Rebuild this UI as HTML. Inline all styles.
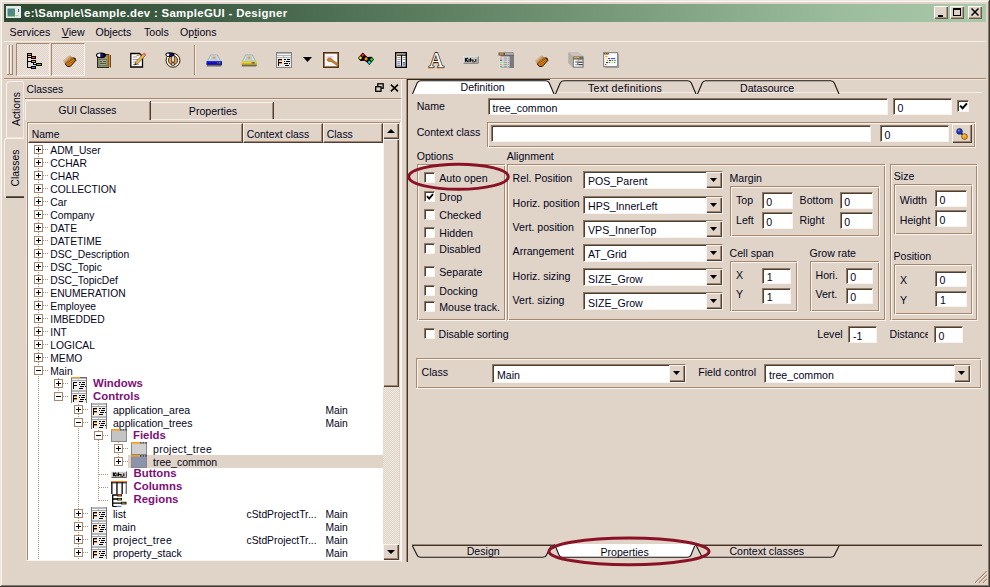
<!DOCTYPE html>
<html><head><meta charset="utf-8"><title>Designer</title>
<style>
html,body{margin:0;padding:0}
body{width:990px;height:587px;overflow:hidden;position:relative;background:#e0d4c8;font-family:"Liberation Sans",sans-serif;color:#04041a}
body div,body svg{position:absolute;box-sizing:border-box}
.t{white-space:nowrap;overflow:visible}
u{text-decoration:underline}
</style></head><body>
<div style="left:0px;top:0px;width:990px;height:587px;background:#e0d4c8"></div>
<div style="left:0px;top:0px;width:990px;height:1px;background:#efe6dd"></div>
<div style="left:0px;top:0px;width:1px;height:587px;background:#efe6dd"></div>
<div style="left:1px;top:1px;width:988px;height:1px;background:#fbf8f4"></div>
<div style="left:1px;top:1px;width:1px;height:585px;background:#fbf8f4"></div>
<div style="left:988px;top:1px;width:1px;height:585px;background:#8c7868"></div>
<div style="left:1px;top:585px;width:988px;height:1px;background:#8c7868"></div>
<div style="left:989px;top:0px;width:1px;height:587px;background:#3c3836"></div>
<div style="left:0px;top:586px;width:990px;height:1px;background:#3c3836"></div>
<div style="left:4px;top:4px;width:982px;height:18px;background:linear-gradient(90deg,#2d4931 0%,#43634a 25%,#6e8f70 55%,#9cbd9d 85%,#a9c9a9 100%)"></div>
<svg style="left:6px;top:6px" width="15" height="12" viewBox="0 0 15 12"><rect x="0" y="0" width="15" height="12" fill="#e8ece8"/><defs><linearGradient id="ig" x1="0" y1="0" x2="1" y2="1"><stop offset="0" stop-color="#4c7a92"/><stop offset="1" stop-color="#4f9a66"/></linearGradient></defs><rect x="1.5" y="2.5" width="7.5" height="8" fill="url(#ig)"/><rect x="12" y="3" width="1" height="3" fill="#2a6a9a"/><rect x="9.5" y="9" width="3" height="1.2" fill="#b8c0b8"/></svg>
<div class="t" style="left:24px;top:5.65px;font-size:11.4px;line-height:14px;color:#fff;font-weight:bold;letter-spacing:0.31px">e:\Sample\Sample.dev : SampleGUI - Designer</div>
<div style="left:934px;top:6px;width:14px;height:13px;background:#e0d4c8;box-shadow:inset 1px 1px 0 #fff,inset -1px -1px 0 #6a5a50,inset -2px -2px 0 #b09880"></div>
<div style="left:938px;top:15px;width:5px;height:2px;background:#000"></div>
<div style="left:950px;top:6px;width:14px;height:13px;background:#e0d4c8;box-shadow:inset 1px 1px 0 #fff,inset -1px -1px 0 #6a5a50,inset -2px -2px 0 #b09880"></div>
<div style="left:953px;top:8px;width:8px;height:8px;border:1px solid #000;border-top:2px solid #000;box-sizing:border-box"></div>
<div style="left:968px;top:6px;width:14px;height:13px;background:#e0d4c8;box-shadow:inset 1px 1px 0 #fff,inset -1px -1px 0 #6a5a50,inset -2px -2px 0 #b09880"></div>
<svg style="left:971px;top:8px" width="8" height="8" viewBox="0 0 8 8"><path d="M0.5 0.5L7.5 7.5M7.5 0.5L0.5 7.5" stroke="#000" stroke-width="1.5"/></svg>
<div class="t" style="left:9.6px;top:25.13px;font-size:10.6px;line-height:14px;">Services</div>
<div class="t" style="left:61.8px;top:25.13px;font-size:10.6px;line-height:14px;"><u>V</u>iew</div>
<div class="t" style="left:95.4px;top:25.13px;font-size:10.6px;line-height:14px;">Objects</div>
<div class="t" style="left:144px;top:25.13px;font-size:10.6px;line-height:14px;">Tools</div>
<div class="t" style="left:180px;top:25.13px;font-size:10.6px;line-height:14px;">Op<u>t</u>ions</div>
<div style="left:4px;top:41px;width:982px;height:1px;background:#f6efe8"></div>
<div style="left:7px;top:45px;width:1px;height:30px;background:#f8f3ee"></div>
<div style="left:9px;top:45px;width:1px;height:30px;background:#a8876c"></div>
<div style="left:7px;top:74px;width:3px;height:1px;background:#a8876c"></div>
<div style="left:10px;top:45px;width:1px;height:30px;background:#f8f3ee"></div>
<div style="left:12px;top:45px;width:1px;height:30px;background:#a8876c"></div>
<div style="left:10px;top:74px;width:3px;height:1px;background:#a8876c"></div>
<div style="left:16px;top:43px;width:34px;height:33px;background-color:#ece4dc;background-image:linear-gradient(45deg,#e0d4c8 25%,transparent 25%,transparent 75%,#e0d4c8 75%),linear-gradient(45deg,#e0d4c8 25%,transparent 25%,transparent 75%,#e0d4c8 75%);background-size:2px 2px;background-position:0 0,1px 1px;border-top:1px solid #a8876c;border-left:1px solid #a8876c;border-right:1px solid #f8f3ee;border-bottom:1px solid #f8f3ee"></div>
<div style="left:51px;top:43px;width:34px;height:33px;background-color:#ece4dc;background-image:linear-gradient(45deg,#e0d4c8 25%,transparent 25%,transparent 75%,#e0d4c8 75%),linear-gradient(45deg,#e0d4c8 25%,transparent 25%,transparent 75%,#e0d4c8 75%);background-size:2px 2px;background-position:0 0,1px 1px;border-top:1px solid #a8876c;border-left:1px solid #a8876c;border-right:1px solid #f8f3ee;border-bottom:1px solid #f8f3ee"></div>
<div style="left:194px;top:45px;width:1px;height:30px;background:#a8876c"></div>
<div style="left:195px;top:45px;width:1px;height:30px;background:#f4ede6"></div>
<div style="left:4px;top:78px;width:982px;height:1px;background:#a8876c"></div>
<div style="left:4px;top:79px;width:982px;height:1px;background:#efe7df"></div>
<svg style="left:26px;top:53px" width="16" height="16" viewBox="0 0 16 16"><rect x="1" y="2" width="1" height="13" fill="#000"/><rect x="1" y="0" width="5" height="3" fill="#000"/><rect x="2" y="1" width="3" height="1" fill="#ff9a1a"/><rect x="2" y="4" width="3" height="1" fill="#000"/><rect x="5" y="3" width="5" height="3" fill="#000"/><rect x="6" y="4" width="3" height="1" fill="#ff4a10"/><rect x="2" y="8" width="3" height="1" fill="#000"/><rect x="5" y="7" width="5" height="3" fill="#000"/><rect x="6" y="8" width="3" height="1" fill="#e0b018"/><rect x="7" y="10" width="1" height="2" fill="#000"/><rect x="7" y="11" width="3" height="1" fill="#000"/><rect x="10" y="10" width="6" height="3" fill="#000"/><rect x="11" y="11" width="4" height="1" fill="#88b020"/><rect x="2" y="14" width="3" height="1" fill="#000"/><rect x="5" y="13" width="5" height="3" fill="#000"/><rect x="6" y="14" width="3" height="1" fill="#5a8cf0"/></svg>
<svg style="left:61px;top:53px" width="16" height="15" viewBox="0 0 16 15"><defs><linearGradient id="bk1" gradientUnits="userSpaceOnUse" x1="9" y1="8" x2="4" y2="3"><stop offset="0" stop-color="#b06a18" stop-opacity="1"/><stop offset="0.45" stop-color="#c08a48" stop-opacity="0.7"/><stop offset="1" stop-color="#d8c0a0" stop-opacity="0"/></linearGradient></defs><path d="M4.2 10.9L0.9 6.8L8.7 2.3L12.3 4.9Z" fill="url(#bk1)"/><path d="M4.2 10.9L12.1 4.9L14 5.2L14.9 7.3L9.45 13.3L6.35 13.5Z" fill="#d8800e" stroke="#140800" stroke-width="1" stroke-linejoin="round"/><path d="M5.2 10.6L12.4 5.3" stroke="#8a4806" stroke-width="1.2"/><path d="M6.6 12.2L13.8 6.8" stroke="#a85c0a" stroke-width="0.9"/><path d="M12.1 4.9L14 5.2L14.9 7.3L13.3 6.4Z" fill="#5a2c02"/><path d="M4.2 10.9L12.1 4.9" stroke="#c89048" stroke-width="0.7"/></svg>
<svg style="left:96px;top:52px" width="16" height="16" viewBox="0 0 16 16"><rect x="1.5" y="2.5" width="11" height="13" fill="#8c9070" stroke="#2a2a20" stroke-width="1"/><rect x="12.5" y="2.5" width="1.8" height="12.5" fill="#e89020"/><rect x="14" y="3" width="0.8" height="12.5" fill="#3a2a10"/><rect x="3" y="7.5" width="8" height="6" fill="#a4aa88" stroke="#5a6048" stroke-width="0.6"/><path d="M4 9.5h2M7 9.5h3M4 11.5h6M5 10.5v1" stroke="#4a5038" stroke-width="0.9"/><ellipse cx="5" cy="3.3" rx="5" ry="2.8" fill="#000"/><ellipse cx="3.6" cy="3.3" rx="2.4" ry="1.7" fill="#fff"/><rect x="4.2" y="1.8" width="3.4" height="3" fill="#10108a"/><path d="M9.2 5.4L11.2 6.4" stroke="#e89020" stroke-width="1.2"/></svg>
<svg style="left:130px;top:52px" width="16" height="16" viewBox="0 0 16 16"><path d="M0.8 1.5H9.5L12.5 4.5V15H0.8Z" fill="#fff" stroke="#000" stroke-width="1.3"/><path d="M3 5h4M3 7.5h5M3 10h3M3 12.5h6" stroke="#9a9a9a" stroke-width="1"/><path d="M6.5 3.5h3" stroke="#ff8a10" stroke-width="1.2"/><path d="M4.5 13L6 9.5L13.5 1.5L15.5 3.2L8 11.5Z" fill="#e8b858" stroke="#6a4a20" stroke-width="0.7"/><path d="M13 2L14.5 0.5L16 2L15.5 3.2Z" fill="#f06078"/><path d="M4.5 13L5.2 11.2L6.3 12.2Z" fill="#000"/></svg>
<svg style="left:165px;top:52px" width="16" height="16" viewBox="0 0 16 16"><circle cx="8" cy="8.3" r="7.7" fill="#f0b070"/><circle cx="8" cy="8.3" r="6.9" fill="#fff" stroke="#1a1410" stroke-width="0.9"/><circle cx="8" cy="8.3" r="4.6" fill="#e89848" stroke="#1a1410" stroke-width="0.8"/><rect x="6.8" y="3" width="2.4" height="7" fill="#fff" stroke="#1a1410" stroke-width="0.7"/><rect x="6.8" y="11" width="2.4" height="2.2" fill="#fff" stroke="#1a1410" stroke-width="0.7"/><ellipse cx="4.8" cy="2.6" rx="4.4" ry="2.4" fill="#000"/><rect x="4" y="1.3" width="3.2" height="2.7" fill="#10108a"/><ellipse cx="2.9" cy="2.7" rx="1.4" ry="1.3" fill="#fff"/></svg>
<svg style="left:205.5px;top:54px" width="16.5" height="14" viewBox="0 0 16.5 14"><defs><linearGradient id="dg1010d8" x1="0" y1="0" x2="0" y2="1"><stop offset="0" stop-color="#2a2622"/><stop offset="1" stop-color="#4a4038" stop-opacity="0"/></linearGradient></defs><path d="M1 10.5H16L15 13.5H0.5Z" fill="url(#dg1010d8)"/><path d="M4.5 1H11.5L14.5 7.5H1.5Z" fill="#d6e4e8" stroke="#8a9aa0" stroke-width="0.7"/><path d="M5.5 2H10.5L12.5 7H3.5Z" fill="#bcd0d6"/><ellipse cx="8" cy="3.8" rx="1.5" ry="1" fill="#f09828"/><rect x="0.5" y="7.2" width="15.5" height="3.3" fill="#1010d8"/><rect x="0.5" y="9.6" width="15.5" height="1" fill="#08088a"/><rect x="11" y="8.2" width="1.3" height="1.3" fill="#ff2020"/><rect x="13" y="8.2" width="1.3" height="1.3" fill="#20e020"/></svg>
<svg style="left:241px;top:54px" width="16.5" height="14" viewBox="0 0 16.5 14"><defs><linearGradient id="dhe8d030" x1="0" y1="0" x2="0" y2="1"><stop offset="0" stop-color="#2a2622"/><stop offset="1" stop-color="#4a4038" stop-opacity="0"/></linearGradient></defs><path d="M1 10.5H16L15 13.5H0.5Z" fill="url(#dhe8d030)"/><path d="M4.5 1H11.5L14.5 7.5H1.5Z" fill="#d6e4e8" stroke="#8a9aa0" stroke-width="0.7"/><path d="M5.5 2H10.5L12.5 7H3.5Z" fill="#bcd0d6"/><ellipse cx="8" cy="3.8" rx="1.5" ry="1" fill="#f09828"/><rect x="0.5" y="7.2" width="15.5" height="3.3" fill="#e8d030"/><rect x="0.5" y="9.6" width="15.5" height="1" fill="#a89818"/><rect x="10.5" y="8.2" width="1.2" height="1.3" fill="#ff2020"/><rect x="11.7" y="8.2" width="1.2" height="1.3" fill="#2020e0"/><rect x="12.9" y="8.2" width="1.2" height="1.3" fill="#20c020"/></svg>
<svg style="left:276px;top:52px" width="16" height="16" viewBox="0 0 16 16"><rect x="0.5" y="0.5" width="15" height="15" fill="#b4b4b4" stroke="#858585" stroke-width="1"/><rect x="1" y="2" width="14" height="1" fill="#f4f4f4"/><rect x="1" y="4" width="6" height="1" fill="#f4f4f4"/><rect x="8" y="4" width="7" height="1" fill="#f4f4f4"/><rect x="1" y="6" width="14" height="9" fill="#e9e9e9"/><rect x="2" y="7" width="1" height="7" fill="#000"/><rect x="2" y="7" width="4" height="1" fill="#000"/><rect x="2" y="10" width="4" height="1" fill="#000"/><rect x="3" y="8" width="3" height="1" fill="#ff8a10"/><rect x="3" y="11" width="3" height="1" fill="#ff8a10"/><rect x="8" y="7" width="2" height="1" fill="#000"/><rect x="11" y="7" width="3" height="1" fill="#000"/><rect x="8" y="9" width="1" height="1" fill="#000"/><rect x="10" y="9" width="4" height="1" fill="#000"/><rect x="8" y="11" width="4" height="1" fill="#000"/><rect x="13" y="11" width="1" height="1" fill="#000"/><rect x="9" y="13" width="4" height="1" fill="#000"/></svg>
<svg style="left:303px;top:57px" width="9" height="5" viewBox="0 0 9 5"><path d="M0 0H9L4.5 5Z" fill="#000"/></svg>
<svg style="left:323px;top:52px" width="16" height="16" viewBox="0 0 16 16"><rect x="0.8" y="0.8" width="14.4" height="14.4" fill="#fbf4f8" stroke="#7a4a1a" stroke-width="1.8"/><rect x="0.5" y="0.5" width="15" height="15" fill="none" stroke="#3a2208" stroke-width="0.6"/><path d="M4 7.5C5.5 5 8.5 5.5 9 7.5L15.5 12L14 13.5L8 9.5C6 10 4.5 9.5 4 7.5Z" fill="#c08030" stroke="#8a5a1a" stroke-width="0.5"/><path d="M3.5 5h7" stroke="#c8b8d0" stroke-width="0.8"/></svg>
<svg style="left:358px;top:52px" width="16" height="13" viewBox="0 0 16 13"><path d="M4.8 0.6L7.7 3.5L9.4 4.9L13.7 4.7L16 7.5L11.3 12.9L8.7 10.3L6.6 8.7L2.4 8.9L0 6Z" fill="#000"/><path d="M4.8 1.5000000000000002L6.5 3.2L4.8 4.9L3.0999999999999996 3.2Z" fill="#ff1010"/><path d="M2.5 4.2L4.2 5.9L2.5 7.6000000000000005L0.8 5.9Z" fill="#f0f010"/><circle cx="8.1" cy="6.8" r="1.6" fill="#ff8a10"/><path d="M13.6 5.8L15.299999999999999 7.5L13.6 9.2L11.9 7.5Z" fill="#10e010"/><path d="M11.3 8.5L13.0 10.2L11.3 11.899999999999999L9.600000000000001 10.2Z" fill="#10e0f0"/></svg>
<svg style="left:395px;top:52px" width="12" height="16" viewBox="0 0 12 16"><rect x="0.7" y="0.7" width="10.6" height="14.6" fill="#fff" stroke="#000" stroke-width="1.4"/><path d="M6.5 3V14.5M2 3.2h9" stroke="#000" stroke-width="1.2"/><path d="M2.3 2h2.5" stroke="#ff8a10" stroke-width="1"/><path d="M2.3 5.5h3M2.3 7.5h3M2.3 9.5h3M7.8 5.5h2.5M7.8 7.5h2.5M2.3 13.5h3M7.8 2h2.5" stroke="#8a8a8a" stroke-width="0.9"/><rect x="2.5" y="10.5" width="1.2" height="2" fill="#f020c0"/><rect x="3.7" y="10.5" width="1.2" height="2" fill="#20c0f0"/><rect x="7.8" y="10" width="2.4" height="3.5" fill="#3070d0"/><rect x="8.4" y="11" width="1.2" height="1.5" fill="#e0e020"/></svg>
<svg style="left:428px;top:51px" width="17" height="18" viewBox="-0.5 -1 17 18"><text x="7.4" y="15.5" text-anchor="middle" font-family="Liberation Serif" font-size="20.5" fill="#f0a858" stroke="#f0a858" stroke-width="1.6">A</text><text x="8" y="15.2" text-anchor="middle" font-family="Liberation Serif" font-size="20.5" fill="#000" stroke="#000" stroke-width="1.5">A</text><text x="8" y="15.2" text-anchor="middle" font-family="Liberation Serif" font-size="20.5" fill="#fff" stroke="#fff" stroke-width="0.25">A</text><circle cx="7.8" cy="7.4" r="0.7" fill="#ff8a10"/></svg>
<svg style="left:463px;top:56px" width="16" height="8" viewBox="0 0 16 8"><rect x="0" y="0" width="15.5" height="7.5" fill="#c8c8c8"/><path d="M0 7.5V0H15.5" stroke="#f4f4f4" stroke-width="1" fill="none"/><path d="M0.5 7.2H15.2V0.5" stroke="#707070" stroke-width="1" fill="none"/><path d="M2.5 2V5.8M2.5 3.8L5 2M2.5 3.8L5 5.8M6 3v2.8M7.5 2V5.8M7.5 4h2M10 3.5V5.8H12M12.8 3V5.8" stroke="#000" stroke-width="1.1" fill="none"/><rect x="10.2" y="5.2" width="1" height="1" fill="#ff8a10"/></svg>
<svg style="left:498px;top:52px" width="16" height="16" viewBox="0 0 16 16"><rect x="2.5" y="3" width="13.5" height="13" fill="#7a7a7a"/><rect x="0.5" y="0.5" width="15" height="3" fill="#505050"/><rect x="1.5" y="1.3" width="4" height="1.3" fill="#ffa020"/><rect x="7" y="1.3" width="8" height="1.3" fill="#d8d8d8"/><rect x="1.5" y="4.5" width="10" height="11" fill="#e4e4e4"/><rect x="2" y="5.5" width="2.3" height="1.3" fill="#ffa020"/><rect x="2" y="7.6" width="2.3" height="1.3" fill="#5050ff"/><rect x="2" y="9.7" width="2.3" height="1.3" fill="#80ff40"/><rect x="2" y="11.8" width="2.3" height="1.3" fill="#ffa020"/><rect x="2" y="13.7" width="2.3" height="1.3" fill="#40c0ff"/><path d="M5.5 6.1h5.5M5.5 8.2h5.5M5.5 10.3h5.5M5.5 12.4h5.5M5.5 14.3h5.5" stroke="#a0a0a0" stroke-width="1.2"/><path d="M9.5 5v10.5" stroke="#e4e4e4" stroke-width="0.6"/></svg>
<svg style="left:533px;top:53px" width="16" height="15" viewBox="0 0 16 15"><defs><linearGradient id="bk2" gradientUnits="userSpaceOnUse" x1="9" y1="8" x2="4" y2="3"><stop offset="0" stop-color="#b06a18" stop-opacity="1"/><stop offset="0.45" stop-color="#c08a48" stop-opacity="0.7"/><stop offset="1" stop-color="#d8c0a0" stop-opacity="0"/></linearGradient></defs><path d="M4.2 10.9L0.9 6.8L8.7 2.3L12.3 4.9Z" fill="url(#bk2)"/><path d="M4.2 10.9L12.1 4.9L14 5.2L14.9 7.3L9.45 13.3L6.35 13.5Z" fill="#d8800e" stroke="#140800" stroke-width="1" stroke-linejoin="round"/><path d="M5.2 10.6L12.4 5.3" stroke="#8a4806" stroke-width="1.2"/><path d="M6.6 12.2L13.8 6.8" stroke="#a85c0a" stroke-width="0.9"/><path d="M12.1 4.9L14 5.2L14.9 7.3L13.3 6.4Z" fill="#5a2c02"/><path d="M4.2 10.9L12.1 4.9" stroke="#c89048" stroke-width="0.7"/></svg>
<svg style="left:568px;top:52px" width="16" height="16" viewBox="0 0 16 16"><path d="M0.5 0.5H10.5L15.5 4.5V15.5H5L0.5 11Z" fill="#a8a8a8"/><path d="M0.5 0.5H10.5L15.5 4.5H5Z" fill="#c8c4bc"/><path d="M0.5 0.5L5 4.5V15.5L0.5 11Z" fill="#b4b0a8"/><rect x="5" y="4.5" width="10.5" height="11" fill="#6a6a6a"/><rect x="5.8" y="5" width="5.5" height="1.2" fill="#ffa020"/><rect x="5.8" y="7" width="9" height="8" fill="#8a8a8a"/><path d="M6.5 14.5V8.5H9.5M6.5 11.5H9" stroke="#fff" stroke-width="1.3" fill="none"/><path d="M10.5 9h4M10.5 11.5h4M7 13.8h7.5" stroke="#fff" stroke-width="1.3"/><path d="M10.5 10.2h4M10.5 12.6h4" stroke="#222" stroke-width="0.9"/></svg>
<svg style="left:603px;top:52px" width="16" height="16" viewBox="0 0 16 16"><rect x="2" y="2" width="14" height="14" fill="#8a8a8a" opacity="0.7"/><rect x="0.6" y="0.6" width="14" height="14" fill="#fcfcfc" stroke="#8a8a8a" stroke-width="1.2"/><rect x="1.2" y="1" width="4.5" height="1.6" fill="#4a3a20"/><rect x="1.8" y="1.2" width="1.2" height="1.1" fill="#ffa020"/><rect x="3.6" y="1.2" width="1.2" height="1.1" fill="#ffa020"/><rect x="2.3" y="4" width="2" height="1.1" fill="#ff8a10"/><rect x="3" y="6" width="1.2" height="1.1" fill="#f0e020"/><rect x="5.2" y="6" width="2" height="1.1" fill="#404040"/><rect x="8" y="6" width="4.2" height="1.1" fill="#4848ff"/><rect x="4" y="8" width="1.2" height="1.1" fill="#20e020"/><rect x="6" y="8" width="2.2" height="1.1" fill="#404040"/><rect x="9.2" y="8" width="1" height="1.1" fill="#404040"/><rect x="11" y="8" width="2" height="1.1" fill="#20e020"/><rect x="3" y="10" width="2.2" height="1.1" fill="#404040"/><rect x="6.2" y="10" width="1" height="1.1" fill="#4848ff"/><rect x="8.2" y="10" width="2" height="1.1" fill="#f0e020"/><rect x="11.2" y="10" width="1" height="1.1" fill="#4848ff"/><rect x="2.2" y="12" width="1.1" height="1.1" fill="#c02010"/></svg>
<div style="left:6px;top:81px;width:18px;height:57px;border-left:1px solid #f8f3ee;border-top:1px solid #f8f3ee;border-right:1px solid #f0e9e2;border-top-left-radius:4px;border-bottom:1px solid #efe7df"></div>
<div class="t" style="left:-23.5px;top:101.8px;width:80px;height:14px;line-height:14px;text-align:center;font-size:10.4px;transform:rotate(-90deg)">Actions</div>
<div style="left:4px;top:138px;width:20px;height:60px;border-left:1px solid #f8f3ee;border-top:1px solid #f8f3ee;border-top-left-radius:3px;border-bottom-left-radius:4px"></div>
<div style="left:6px;top:196px;width:18px;height:1px;background:#6a5a50"></div>
<div style="left:6px;top:197px;width:18px;height:1px;background:#3a3432"></div>
<div class="t" style="left:-24.5px;top:161.2px;width:80px;height:14px;line-height:14px;text-align:center;font-size:10.4px;transform:rotate(-90deg)">Classes</div>
<div class="t" style="left:26.6px;top:82.73px;font-size:10.3px;line-height:13px;">Classes</div>
<svg style="left:375px;top:83px" width="9" height="9" viewBox="0 0 9 9"><rect x="2.8" y="0.8" width="5.4" height="4.4" fill="none" stroke="#000" stroke-width="1.3"/><rect x="0.7" y="3.7" width="5.3" height="4.6" fill="#e0d4c8" stroke="#000" stroke-width="1.3"/></svg>
<svg style="left:390px;top:84px" width="9" height="8" viewBox="0 0 9 8"><path d="M0.8 0.6L8 7.4M8 0.6L0.8 7.4" stroke="#000" stroke-width="1.5"/></svg>
<div style="left:25px;top:98px;width:377px;height:1px;background:#a8876c"></div>
<div style="left:25px;top:99px;width:377px;height:1px;background:#efe7df"></div>
<div style="left:25px;top:100px;width:126px;height:20px;border-left:1px solid #f8f3ee;border-top:1px solid #f8f3ee;border-top-left-radius:3px"></div>
<div style="left:150px;top:101px;width:1px;height:19px;background:#4a403a"></div>
<div style="left:149px;top:102px;width:1px;height:18px;background:#a8876c"></div>
<div class="t" style="left:25px;top:103.53px;font-size:10.3px;line-height:13px;width:125px;text-align:center;">GUI Classes</div>
<div style="left:151px;top:102px;width:122px;height:17px;border-top:1px solid #f8f3ee"></div>
<div style="left:273px;top:102px;width:1px;height:17px;background:#4a403a"></div>
<div style="left:272px;top:103px;width:1px;height:16px;background:#a8876c"></div>
<div class="t" style="left:152px;top:103.93px;font-size:10.6px;line-height:14px;width:122px;text-align:center;">Properties</div>
<div style="left:151px;top:119px;width:251px;height:1px;background:#f4ede6"></div>
<div style="left:26px;top:122px;width:1px;height:439px;background:#efe7df"></div>
<div style="left:27px;top:123px;width:1px;height:437px;background:#a8876c"></div>
<div style="left:27px;top:122px;width:373px;height:1px;background:#a8876c"></div>
<div style="left:27px;top:560px;width:374px;height:1px;background:#f8f3ee"></div>
<div style="left:400px;top:122px;width:1px;height:439px;background:#f8f3ee"></div>
<div style="left:28px;top:143px;width:355px;height:417px;background:#fff"></div>
<div style="left:28px;top:123px;width:215px;height:20px;background:#e0d4c8;border-top:1px solid #f8f3ee;border-left:1px solid #f8f3ee;border-right:1px solid #4a403a;border-bottom:1px solid #4a403a"></div>
<div style="left:241px;top:124px;width:1px;height:18px;background:#a8876c"></div>
<div style="left:29px;top:141px;width:213px;height:1px;background:#a8876c"></div>
<div class="t" style="left:31.8px;top:127.80px;font-size:10.4px;line-height:13px;">Name</div>
<div style="left:243px;top:123px;width:80px;height:20px;background:#e0d4c8;border-top:1px solid #f8f3ee;border-left:1px solid #f8f3ee;border-right:1px solid #4a403a;border-bottom:1px solid #4a403a"></div>
<div style="left:321px;top:124px;width:1px;height:18px;background:#a8876c"></div>
<div style="left:244px;top:141px;width:78px;height:1px;background:#a8876c"></div>
<div class="t" style="left:246.8px;top:127.80px;font-size:10.4px;line-height:13px;">Context class</div>
<div style="left:323px;top:123px;width:60px;height:20px;background:#e0d4c8;border-top:1px solid #f8f3ee;border-left:1px solid #f8f3ee;border-right:1px solid #4a403a;border-bottom:1px solid #4a403a"></div>
<div style="left:381px;top:124px;width:1px;height:18px;background:#a8876c"></div>
<div style="left:324px;top:141px;width:58px;height:1px;background:#a8876c"></div>
<div class="t" style="left:326.8px;top:127.80px;font-size:10.4px;line-height:13px;">Class</div>
<div style="left:383px;top:123px;width:16px;height:437px;background-color:#efe8e1;background-image:linear-gradient(45deg,#e0d4c8 25%,transparent 25%,transparent 75%,#e0d4c8 75%),linear-gradient(45deg,#e0d4c8 25%,transparent 25%,transparent 75%,#e0d4c8 75%);background-size:2px 2px;background-position:0 0,1px 1px;"></div>
<div style="left:383px;top:123px;width:16px;height:16px;background:#e0d4c8;box-shadow:inset 1px 1px 0 #f8f3ee,inset -1px -1px 0 #4a403a,inset -2px -2px 0 #a8876c"></div>
<svg style="left:387px;top:129px" width="8" height="4" viewBox="0 0 8 4"><path d="M0 4H8L4 0Z" fill="#000"/></svg>
<div style="left:383px;top:139px;width:16px;height:248px;background:#e0d4c8;box-shadow:inset 1px 1px 0 #f8f3ee,inset -1px -1px 0 #4a403a,inset -2px -2px 0 #a8876c"></div>
<div style="left:383px;top:544px;width:16px;height:16px;background:#e0d4c8;box-shadow:inset 1px 1px 0 #f8f3ee,inset -1px -1px 0 #4a403a,inset -2px -2px 0 #a8876c"></div>
<svg style="left:387px;top:550px" width="8" height="4" viewBox="0 0 8 4"><path d="M0 0H8L4 4Z" fill="#000"/></svg>
<div style="left:401px;top:80px;width:1px;height:482px;background:#f8f3ee"></div>
<div style="left:38px;top:146px;width:1px;height:414px;background-image:linear-gradient(#b09078 50%,transparent 50%);background-size:1px 2px"></div>
<div style="left:43px;top:149px;width:5px;height:1px;background-image:linear-gradient(90deg,#b09078 50%,transparent 50%);background-size:2px 1px"></div>
<div style="left:34.0px;top:145.0px;width:9px;height:9px;background:#fff;border:1px solid #a8876c"></div>
<div style="left:36.0px;top:149.0px;width:5px;height:1px;background:#000"></div>
<div style="left:38.0px;top:147.0px;width:1px;height:5px;background:#000"></div>
<div class="t" style="left:50.3px;top:144.13px;font-size:10.3px;line-height:13px;">ADM_User</div>
<div style="left:43px;top:162px;width:5px;height:1px;background-image:linear-gradient(90deg,#b09078 50%,transparent 50%);background-size:2px 1px"></div>
<div style="left:34.0px;top:158.0px;width:9px;height:9px;background:#fff;border:1px solid #a8876c"></div>
<div style="left:36.0px;top:162.0px;width:5px;height:1px;background:#000"></div>
<div style="left:38.0px;top:160.0px;width:1px;height:5px;background:#000"></div>
<div class="t" style="left:50.3px;top:157.13px;font-size:10.3px;line-height:13px;">CCHAR</div>
<div style="left:43px;top:175px;width:5px;height:1px;background-image:linear-gradient(90deg,#b09078 50%,transparent 50%);background-size:2px 1px"></div>
<div style="left:34.0px;top:171.0px;width:9px;height:9px;background:#fff;border:1px solid #a8876c"></div>
<div style="left:36.0px;top:175.0px;width:5px;height:1px;background:#000"></div>
<div style="left:38.0px;top:173.0px;width:1px;height:5px;background:#000"></div>
<div class="t" style="left:50.3px;top:170.13px;font-size:10.3px;line-height:13px;">CHAR</div>
<div style="left:43px;top:188px;width:5px;height:1px;background-image:linear-gradient(90deg,#b09078 50%,transparent 50%);background-size:2px 1px"></div>
<div style="left:34.0px;top:184.0px;width:9px;height:9px;background:#fff;border:1px solid #a8876c"></div>
<div style="left:36.0px;top:188.0px;width:5px;height:1px;background:#000"></div>
<div style="left:38.0px;top:186.0px;width:1px;height:5px;background:#000"></div>
<div class="t" style="left:50.3px;top:183.13px;font-size:10.3px;line-height:13px;">COLLECTION</div>
<div style="left:43px;top:201px;width:5px;height:1px;background-image:linear-gradient(90deg,#b09078 50%,transparent 50%);background-size:2px 1px"></div>
<div style="left:34.0px;top:197.0px;width:9px;height:9px;background:#fff;border:1px solid #a8876c"></div>
<div style="left:36.0px;top:201.0px;width:5px;height:1px;background:#000"></div>
<div style="left:38.0px;top:199.0px;width:1px;height:5px;background:#000"></div>
<div class="t" style="left:50.3px;top:196.13px;font-size:10.3px;line-height:13px;">Car</div>
<div style="left:43px;top:214px;width:5px;height:1px;background-image:linear-gradient(90deg,#b09078 50%,transparent 50%);background-size:2px 1px"></div>
<div style="left:34.0px;top:210.0px;width:9px;height:9px;background:#fff;border:1px solid #a8876c"></div>
<div style="left:36.0px;top:214.0px;width:5px;height:1px;background:#000"></div>
<div style="left:38.0px;top:212.0px;width:1px;height:5px;background:#000"></div>
<div class="t" style="left:50.3px;top:209.13px;font-size:10.3px;line-height:13px;">Company</div>
<div style="left:43px;top:227px;width:5px;height:1px;background-image:linear-gradient(90deg,#b09078 50%,transparent 50%);background-size:2px 1px"></div>
<div style="left:34.0px;top:223.0px;width:9px;height:9px;background:#fff;border:1px solid #a8876c"></div>
<div style="left:36.0px;top:227.0px;width:5px;height:1px;background:#000"></div>
<div style="left:38.0px;top:225.0px;width:1px;height:5px;background:#000"></div>
<div class="t" style="left:50.3px;top:222.13px;font-size:10.3px;line-height:13px;">DATE</div>
<div style="left:43px;top:240px;width:5px;height:1px;background-image:linear-gradient(90deg,#b09078 50%,transparent 50%);background-size:2px 1px"></div>
<div style="left:34.0px;top:236.0px;width:9px;height:9px;background:#fff;border:1px solid #a8876c"></div>
<div style="left:36.0px;top:240.0px;width:5px;height:1px;background:#000"></div>
<div style="left:38.0px;top:238.0px;width:1px;height:5px;background:#000"></div>
<div class="t" style="left:50.3px;top:235.13px;font-size:10.3px;line-height:13px;">DATETIME</div>
<div style="left:43px;top:253px;width:5px;height:1px;background-image:linear-gradient(90deg,#b09078 50%,transparent 50%);background-size:2px 1px"></div>
<div style="left:34.0px;top:249.0px;width:9px;height:9px;background:#fff;border:1px solid #a8876c"></div>
<div style="left:36.0px;top:253.0px;width:5px;height:1px;background:#000"></div>
<div style="left:38.0px;top:251.0px;width:1px;height:5px;background:#000"></div>
<div class="t" style="left:50.3px;top:248.13px;font-size:10.3px;line-height:13px;">DSC_Description</div>
<div style="left:43px;top:266px;width:5px;height:1px;background-image:linear-gradient(90deg,#b09078 50%,transparent 50%);background-size:2px 1px"></div>
<div style="left:34.0px;top:262.0px;width:9px;height:9px;background:#fff;border:1px solid #a8876c"></div>
<div style="left:36.0px;top:266.0px;width:5px;height:1px;background:#000"></div>
<div style="left:38.0px;top:264.0px;width:1px;height:5px;background:#000"></div>
<div class="t" style="left:50.3px;top:261.13px;font-size:10.3px;line-height:13px;">DSC_Topic</div>
<div style="left:43px;top:279px;width:5px;height:1px;background-image:linear-gradient(90deg,#b09078 50%,transparent 50%);background-size:2px 1px"></div>
<div style="left:34.0px;top:275.0px;width:9px;height:9px;background:#fff;border:1px solid #a8876c"></div>
<div style="left:36.0px;top:279.0px;width:5px;height:1px;background:#000"></div>
<div style="left:38.0px;top:277.0px;width:1px;height:5px;background:#000"></div>
<div class="t" style="left:50.3px;top:274.13px;font-size:10.3px;line-height:13px;">DSC_TopicDef</div>
<div style="left:43px;top:292px;width:5px;height:1px;background-image:linear-gradient(90deg,#b09078 50%,transparent 50%);background-size:2px 1px"></div>
<div style="left:34.0px;top:288.0px;width:9px;height:9px;background:#fff;border:1px solid #a8876c"></div>
<div style="left:36.0px;top:292.0px;width:5px;height:1px;background:#000"></div>
<div style="left:38.0px;top:290.0px;width:1px;height:5px;background:#000"></div>
<div class="t" style="left:50.3px;top:287.13px;font-size:10.3px;line-height:13px;">ENUMERATION</div>
<div style="left:43px;top:305px;width:5px;height:1px;background-image:linear-gradient(90deg,#b09078 50%,transparent 50%);background-size:2px 1px"></div>
<div style="left:34.0px;top:301.0px;width:9px;height:9px;background:#fff;border:1px solid #a8876c"></div>
<div style="left:36.0px;top:305.0px;width:5px;height:1px;background:#000"></div>
<div style="left:38.0px;top:303.0px;width:1px;height:5px;background:#000"></div>
<div class="t" style="left:50.3px;top:300.13px;font-size:10.3px;line-height:13px;">Employee</div>
<div style="left:43px;top:318px;width:5px;height:1px;background-image:linear-gradient(90deg,#b09078 50%,transparent 50%);background-size:2px 1px"></div>
<div style="left:34.0px;top:314.0px;width:9px;height:9px;background:#fff;border:1px solid #a8876c"></div>
<div style="left:36.0px;top:318.0px;width:5px;height:1px;background:#000"></div>
<div style="left:38.0px;top:316.0px;width:1px;height:5px;background:#000"></div>
<div class="t" style="left:50.3px;top:313.13px;font-size:10.3px;line-height:13px;">IMBEDDED</div>
<div style="left:43px;top:331px;width:5px;height:1px;background-image:linear-gradient(90deg,#b09078 50%,transparent 50%);background-size:2px 1px"></div>
<div style="left:34.0px;top:327.0px;width:9px;height:9px;background:#fff;border:1px solid #a8876c"></div>
<div style="left:36.0px;top:331.0px;width:5px;height:1px;background:#000"></div>
<div style="left:38.0px;top:329.0px;width:1px;height:5px;background:#000"></div>
<div class="t" style="left:50.3px;top:326.13px;font-size:10.3px;line-height:13px;">INT</div>
<div style="left:43px;top:344px;width:5px;height:1px;background-image:linear-gradient(90deg,#b09078 50%,transparent 50%);background-size:2px 1px"></div>
<div style="left:34.0px;top:340.0px;width:9px;height:9px;background:#fff;border:1px solid #a8876c"></div>
<div style="left:36.0px;top:344.0px;width:5px;height:1px;background:#000"></div>
<div style="left:38.0px;top:342.0px;width:1px;height:5px;background:#000"></div>
<div class="t" style="left:50.3px;top:339.13px;font-size:10.3px;line-height:13px;">LOGICAL</div>
<div style="left:43px;top:357px;width:5px;height:1px;background-image:linear-gradient(90deg,#b09078 50%,transparent 50%);background-size:2px 1px"></div>
<div style="left:34.0px;top:353.0px;width:9px;height:9px;background:#fff;border:1px solid #a8876c"></div>
<div style="left:36.0px;top:357.0px;width:5px;height:1px;background:#000"></div>
<div style="left:38.0px;top:355.0px;width:1px;height:5px;background:#000"></div>
<div class="t" style="left:50.3px;top:352.13px;font-size:10.3px;line-height:13px;">MEMO</div>
<div style="left:43px;top:370px;width:5px;height:1px;background-image:linear-gradient(90deg,#b09078 50%,transparent 50%);background-size:2px 1px"></div>
<div style="left:34.0px;top:366.0px;width:9px;height:9px;background:#fff;border:1px solid #a8876c"></div>
<div style="left:36.0px;top:370.0px;width:5px;height:1px;background:#000"></div>
<div class="t" style="left:50.3px;top:365.13px;font-size:10.3px;line-height:13px;">Main</div>
<div style="left:128px;top:455px;width:255px;height:13px;background:#e0d4c8"></div>
<div style="left:58px;top:378px;width:1px;height:19px;background-image:linear-gradient(#b09078 50%,transparent 50%);background-size:1px 2px"></div>
<div style="left:78px;top:404px;width:1px;height:156px;background-image:linear-gradient(#b09078 50%,transparent 50%);background-size:1px 2px"></div>
<div style="left:98px;top:430px;width:1px;height:71px;background-image:linear-gradient(#b09078 50%,transparent 50%);background-size:1px 2px"></div>
<div style="left:118px;top:442px;width:1px;height:21px;background-image:linear-gradient(#b09078 50%,transparent 50%);background-size:1px 2px"></div>
<div style="left:54.0px;top:379.0px;width:9px;height:9px;background:#fff;border:1px solid #a8876c"></div>
<div style="left:56.0px;top:383.0px;width:5px;height:1px;background:#000"></div>
<div style="left:58.0px;top:381.0px;width:1px;height:5px;background:#000"></div>
<div style="left:63px;top:383px;width:5px;height:1px;background-image:linear-gradient(90deg,#b09078 50%,transparent 50%);background-size:2px 1px"></div>
<svg style="left:71px;top:377px" width="16" height="13" viewBox="0 0 16 13"><rect x="0" y="0" width="16" height="13" fill="#b8b8b8"/><rect x="0" y="0" width="1" height="13" fill="#787878"/><rect x="15" y="0" width="1" height="13" fill="#787878"/><rect x="0" y="0" width="9" height="1" fill="#ff9a1a"/><rect x="9" y="0" width="7" height="1" fill="#686868"/><rect x="1" y="2" width="6" height="1" fill="#f8f8f8"/><rect x="8" y="2" width="7" height="1" fill="#f8f8f8"/><rect x="1" y="3" width="14" height="1" fill="#a4a4a4"/><rect x="1" y="4" width="14" height="9" fill="#eeeeee"/><rect x="2" y="5" width="1" height="7" fill="#000"/><rect x="2" y="5" width="4" height="1" fill="#000"/><rect x="2" y="8" width="4" height="1" fill="#000"/><rect x="8" y="5" width="2" height="1" fill="#000"/><rect x="11" y="5" width="3" height="1" fill="#000"/><rect x="8" y="7" width="1" height="1" fill="#000"/><rect x="10" y="7" width="4" height="1" fill="#000"/><rect x="9" y="9" width="4" height="1" fill="#000"/><rect x="14" y="9" width="1" height="1" fill="#000"/><rect x="8" y="11" width="4" height="1" fill="#000"/></svg>
<div class="t" style="left:93px;top:375.85px;font-size:11.4px;line-height:14px;font-weight:bold;color:#7e0f78">Windows</div>
<div style="left:54.0px;top:392.0px;width:9px;height:9px;background:#fff;border:1px solid #a8876c"></div>
<div style="left:56.0px;top:396.0px;width:5px;height:1px;background:#000"></div>
<div style="left:63px;top:396px;width:5px;height:1px;background-image:linear-gradient(90deg,#b09078 50%,transparent 50%);background-size:2px 1px"></div>
<svg style="left:71px;top:390px" width="16" height="13" viewBox="0 0 16 13"><rect x="0" y="0" width="16" height="13" fill="#b8b8b8"/><rect x="0" y="0" width="1" height="13" fill="#787878"/><rect x="15" y="0" width="1" height="13" fill="#787878"/><rect x="1" y="2" width="6" height="1" fill="#f8f8f8"/><rect x="8" y="2" width="7" height="1" fill="#f8f8f8"/><rect x="1" y="3" width="14" height="1" fill="#a4a4a4"/><rect x="1" y="4" width="14" height="9" fill="#eeeeee"/><rect x="2" y="5" width="1" height="7" fill="#000"/><rect x="2" y="5" width="4" height="1" fill="#000"/><rect x="2" y="8" width="4" height="1" fill="#000"/><rect x="3" y="6" width="3" height="1" fill="#ff8a10"/><rect x="3" y="9" width="3" height="1" fill="#ff8a10"/><rect x="8" y="5" width="2" height="1" fill="#000"/><rect x="11" y="5" width="3" height="1" fill="#000"/><rect x="8" y="7" width="1" height="1" fill="#000"/><rect x="10" y="7" width="4" height="1" fill="#000"/><rect x="9" y="9" width="4" height="1" fill="#000"/><rect x="14" y="9" width="1" height="1" fill="#000"/><rect x="8" y="11" width="4" height="1" fill="#000"/></svg>
<div class="t" style="left:93px;top:388.85px;font-size:11.4px;line-height:14px;font-weight:bold;color:#7e0f78">Controls</div>
<div style="left:74.0px;top:405.0px;width:9px;height:9px;background:#fff;border:1px solid #a8876c"></div>
<div style="left:76.0px;top:409.0px;width:5px;height:1px;background:#000"></div>
<div style="left:78.0px;top:407.0px;width:1px;height:5px;background:#000"></div>
<div style="left:83px;top:409px;width:5px;height:1px;background-image:linear-gradient(90deg,#b09078 50%,transparent 50%);background-size:2px 1px"></div>
<svg style="left:91px;top:403px" width="16" height="13" viewBox="0 0 16 13"><rect x="0" y="0" width="16" height="13" fill="#b8b8b8"/><rect x="0" y="0" width="1" height="13" fill="#787878"/><rect x="15" y="0" width="1" height="13" fill="#787878"/><rect x="1" y="2" width="6" height="1" fill="#f8f8f8"/><rect x="8" y="2" width="7" height="1" fill="#f8f8f8"/><rect x="1" y="3" width="14" height="1" fill="#a4a4a4"/><rect x="1" y="4" width="14" height="9" fill="#eeeeee"/><rect x="2" y="5" width="1" height="7" fill="#000"/><rect x="2" y="5" width="4" height="1" fill="#000"/><rect x="2" y="8" width="4" height="1" fill="#000"/><rect x="3" y="6" width="3" height="1" fill="#ff8a10"/><rect x="3" y="9" width="3" height="1" fill="#ff8a10"/><rect x="8" y="5" width="2" height="1" fill="#000"/><rect x="11" y="5" width="3" height="1" fill="#000"/><rect x="8" y="7" width="1" height="1" fill="#000"/><rect x="10" y="7" width="4" height="1" fill="#000"/><rect x="9" y="9" width="4" height="1" fill="#000"/><rect x="14" y="9" width="1" height="1" fill="#000"/><rect x="8" y="11" width="4" height="1" fill="#000"/></svg>
<div class="t" style="left:113px;top:404.06px;font-size:10.5px;line-height:13px;">application_area</div>
<div class="t" style="left:325.5px;top:404.13px;font-size:10.3px;line-height:13px;">Main</div>
<div style="left:74.0px;top:418.0px;width:9px;height:9px;background:#fff;border:1px solid #a8876c"></div>
<div style="left:76.0px;top:422.0px;width:5px;height:1px;background:#000"></div>
<div style="left:83px;top:422px;width:5px;height:1px;background-image:linear-gradient(90deg,#b09078 50%,transparent 50%);background-size:2px 1px"></div>
<svg style="left:91px;top:416px" width="16" height="13" viewBox="0 0 16 13"><rect x="0" y="0" width="16" height="13" fill="#b8b8b8"/><rect x="0" y="0" width="1" height="13" fill="#787878"/><rect x="15" y="0" width="1" height="13" fill="#787878"/><rect x="1" y="2" width="6" height="1" fill="#f8f8f8"/><rect x="8" y="2" width="7" height="1" fill="#f8f8f8"/><rect x="1" y="3" width="14" height="1" fill="#a4a4a4"/><rect x="1" y="4" width="14" height="9" fill="#eeeeee"/><rect x="2" y="5" width="1" height="7" fill="#000"/><rect x="2" y="5" width="4" height="1" fill="#000"/><rect x="2" y="8" width="4" height="1" fill="#000"/><rect x="3" y="6" width="3" height="1" fill="#ff8a10"/><rect x="3" y="9" width="3" height="1" fill="#ff8a10"/><rect x="8" y="5" width="2" height="1" fill="#000"/><rect x="11" y="5" width="3" height="1" fill="#000"/><rect x="8" y="7" width="1" height="1" fill="#000"/><rect x="10" y="7" width="4" height="1" fill="#000"/><rect x="9" y="9" width="4" height="1" fill="#000"/><rect x="14" y="9" width="1" height="1" fill="#000"/><rect x="8" y="11" width="4" height="1" fill="#000"/></svg>
<div class="t" style="left:113px;top:417.06px;font-size:10.5px;line-height:13px;">application_trees</div>
<div class="t" style="left:325.5px;top:417.13px;font-size:10.3px;line-height:13px;">Main</div>
<div style="left:94.0px;top:431.0px;width:9px;height:9px;background:#fff;border:1px solid #a8876c"></div>
<div style="left:96.0px;top:435.0px;width:5px;height:1px;background:#000"></div>
<div style="left:103px;top:435px;width:5px;height:1px;background-image:linear-gradient(90deg,#b09078 50%,transparent 50%);background-size:2px 1px"></div>
<svg style="left:111px;top:429px" width="16" height="13" viewBox="0 0 16 13"><rect x="0" y="0" width="16" height="13" fill="#c4c4c4"/><rect x="0" y="0" width="1" height="13" fill="#888"/><rect x="15" y="0" width="1" height="13" fill="#888"/><rect x="0" y="12" width="16" height="1" fill="#888"/><rect x="0" y="0" width="9" height="1.6" fill="#ff9a1a"/><rect x="9" y="0" width="7" height="1.6" fill="#555"/><rect x="10.5" y="0.4" width="1.2" height="1" fill="#ddd"/><rect x="13" y="0.4" width="1.2" height="1" fill="#ddd"/></svg>
<div class="t" style="left:133px;top:427.85px;font-size:11.4px;line-height:14px;font-weight:bold;color:#7e0f78">Fields</div>
<div style="left:114.0px;top:444.0px;width:9px;height:9px;background:#fff;border:1px solid #a8876c"></div>
<div style="left:116.0px;top:448.0px;width:5px;height:1px;background:#000"></div>
<div style="left:118.0px;top:446.0px;width:1px;height:5px;background:#000"></div>
<div style="left:123px;top:448px;width:5px;height:1px;background-image:linear-gradient(90deg,#b09078 50%,transparent 50%);background-size:2px 1px"></div>
<svg style="left:131px;top:442px" width="16" height="13" viewBox="0 0 16 13"><rect x="0" y="0" width="16" height="13" fill="#d0d0d0"/><rect x="0" y="0" width="1" height="13" fill="#888"/><rect x="15" y="0" width="1" height="13" fill="#888"/><rect x="0" y="12" width="16" height="1" fill="#888"/><rect x="0" y="0" width="9" height="1.6" fill="#ff9a1a"/><rect x="9" y="0" width="7" height="1.6" fill="#555"/><rect x="10.5" y="0.4" width="1.2" height="1" fill="#ddd"/><rect x="13" y="0.4" width="1.2" height="1" fill="#ddd"/></svg>
<div class="t" style="left:153px;top:443.06px;font-size:10.5px;line-height:13px;letter-spacing:0.3px">project_tree</div>
<div style="left:114.0px;top:457.0px;width:9px;height:9px;background:#fff;border:1px solid #a8876c"></div>
<div style="left:116.0px;top:461.0px;width:5px;height:1px;background:#000"></div>
<div style="left:118.0px;top:459.0px;width:1px;height:5px;background:#000"></div>
<div style="left:123px;top:461px;width:5px;height:1px;background-image:linear-gradient(90deg,#b09078 50%,transparent 50%);background-size:2px 1px"></div>
<svg style="left:131px;top:455px" width="16" height="13" viewBox="0 0 16 13"><rect x="0" y="0" width="16" height="13" fill="#8c94ac"/><rect x="0" y="0" width="1" height="13" fill="#888"/><rect x="15" y="0" width="1" height="13" fill="#888"/><rect x="0" y="12" width="16" height="1" fill="#888"/><rect x="0" y="0" width="9" height="1.6" fill="#ff9a1a"/><rect x="9" y="0" width="7" height="1.6" fill="#4a4a5a"/><rect x="10.5" y="0.4" width="1.2" height="1" fill="#ddd"/><rect x="13" y="0.4" width="1.2" height="1" fill="#ddd"/></svg>
<div class="t" style="left:153px;top:456.06px;font-size:10.5px;line-height:13px;">tree_common</div>
<div style="left:99px;top:474px;width:9px;height:1px;background-image:linear-gradient(90deg,#b09078 50%,transparent 50%);background-size:2px 1px"></div>
<div style="left:99px;top:487px;width:9px;height:1px;background-image:linear-gradient(90deg,#b09078 50%,transparent 50%);background-size:2px 1px"></div>
<div style="left:99px;top:500px;width:9px;height:1px;background-image:linear-gradient(90deg,#b09078 50%,transparent 50%);background-size:2px 1px"></div>
<svg style="left:111px;top:471px" width="16" height="7" viewBox="0 0 16 7"><rect x="0" y="0" width="16" height="7" fill="#c8c8c8"/><path d="M0 7V0.5H16" stroke="#f4f4f4" stroke-width="1" fill="none"/><path d="M0.5 6.5H15.5V0.5" stroke="#606060" stroke-width="1" fill="none"/><path d="M2.5 1.5V5.3M2.5 3.5L5 1.8M2.5 3.5L5 5.3M6 2.5v2.8M7.5 1.5V5.3M7.5 3.5h2M10 3V5.3H12M12.8 2.5V5.3" stroke="#000" stroke-width="1.1" fill="none"/><rect x="10.2" y="4.6" width="1" height="1" fill="#ff8a10"/></svg>
<div class="t" style="left:133.5px;top:465.85px;font-size:11.4px;line-height:14px;font-weight:bold;color:#7e0f78">Buttons</div>
<svg style="left:111px;top:481px" width="16" height="13" viewBox="0 0 16 13"><rect x="0" y="0" width="16" height="1.3" fill="#ff7a10"/><rect x="0" y="1.3" width="16" height="1" fill="#000"/><rect x="0.2" y="1.3" width="1.3" height="11.7" fill="#000"/><rect x="5.3" y="1.3" width="1.3" height="11.7" fill="#000"/><rect x="10.5" y="1.3" width="1.3" height="11.7" fill="#000"/><rect x="14.7" y="1.3" width="1.1" height="11.7" fill="#555"/></svg>
<div class="t" style="left:133.5px;top:478.85px;font-size:11.4px;line-height:14px;font-weight:bold;color:#7e0f78">Columns</div>
<svg style="left:111px;top:494px" width="16" height="13" viewBox="0 0 16 13"><path d="M1.7 0.5V12.5M1.7 1H6M1.7 5H6M1.7 9.2H10.5M1.7 12.6H6" stroke="#000" stroke-width="1.3" fill="none"/><rect x="6" y="0.2" width="5" height="2.2" fill="#000"/><rect x="6.8" y="0.6" width="3.4" height="1.2" fill="#ff5a10"/><rect x="6" y="4" width="5" height="2.4" fill="#000"/><rect x="6.8" y="4.6" width="3.4" height="1.2" fill="#c09818"/><rect x="10" y="7.8" width="5.5" height="2.6" fill="#000"/><rect x="10.8" y="8.5" width="3.8" height="1.2" fill="#98a818"/><rect x="5.5" y="11.8" width="5" height="1.2" fill="#4a7cf0"/></svg>
<div class="t" style="left:133.5px;top:491.85px;font-size:11.4px;line-height:14px;font-weight:bold;color:#7e0f78">Regions</div>
<div style="left:74.0px;top:509.0px;width:9px;height:9px;background:#fff;border:1px solid #a8876c"></div>
<div style="left:76.0px;top:513.0px;width:5px;height:1px;background:#000"></div>
<div style="left:78.0px;top:511.0px;width:1px;height:5px;background:#000"></div>
<div style="left:83px;top:513px;width:5px;height:1px;background-image:linear-gradient(90deg,#b09078 50%,transparent 50%);background-size:2px 1px"></div>
<svg style="left:91px;top:507px" width="16" height="13" viewBox="0 0 16 13"><rect x="0" y="0" width="16" height="13" fill="#b8b8b8"/><rect x="0" y="0" width="1" height="13" fill="#787878"/><rect x="15" y="0" width="1" height="13" fill="#787878"/><rect x="1" y="2" width="6" height="1" fill="#f8f8f8"/><rect x="8" y="2" width="7" height="1" fill="#f8f8f8"/><rect x="1" y="3" width="14" height="1" fill="#a4a4a4"/><rect x="1" y="4" width="14" height="9" fill="#eeeeee"/><rect x="2" y="5" width="1" height="7" fill="#000"/><rect x="2" y="5" width="4" height="1" fill="#000"/><rect x="2" y="8" width="4" height="1" fill="#000"/><rect x="3" y="6" width="3" height="1" fill="#ff8a10"/><rect x="3" y="9" width="3" height="1" fill="#ff8a10"/><rect x="8" y="5" width="2" height="1" fill="#000"/><rect x="11" y="5" width="3" height="1" fill="#000"/><rect x="8" y="7" width="1" height="1" fill="#000"/><rect x="10" y="7" width="4" height="1" fill="#000"/><rect x="9" y="9" width="4" height="1" fill="#000"/><rect x="14" y="9" width="1" height="1" fill="#000"/><rect x="8" y="11" width="4" height="1" fill="#000"/></svg>
<div class="t" style="left:113px;top:508.06px;font-size:10.5px;line-height:13px;">list</div>
<div class="t" style="left:246.5px;top:508.13px;font-size:10.3px;line-height:13px;">cStdProjectTr...</div>
<div class="t" style="left:325.5px;top:508.13px;font-size:10.3px;line-height:13px;">Main</div>
<div style="left:74.0px;top:522.0px;width:9px;height:9px;background:#fff;border:1px solid #a8876c"></div>
<div style="left:76.0px;top:526.0px;width:5px;height:1px;background:#000"></div>
<div style="left:78.0px;top:524.0px;width:1px;height:5px;background:#000"></div>
<div style="left:83px;top:526px;width:5px;height:1px;background-image:linear-gradient(90deg,#b09078 50%,transparent 50%);background-size:2px 1px"></div>
<svg style="left:91px;top:520px" width="16" height="13" viewBox="0 0 16 13"><rect x="0" y="0" width="16" height="13" fill="#b8b8b8"/><rect x="0" y="0" width="1" height="13" fill="#787878"/><rect x="15" y="0" width="1" height="13" fill="#787878"/><rect x="1" y="2" width="6" height="1" fill="#f8f8f8"/><rect x="8" y="2" width="7" height="1" fill="#f8f8f8"/><rect x="1" y="3" width="14" height="1" fill="#a4a4a4"/><rect x="1" y="4" width="14" height="9" fill="#eeeeee"/><rect x="2" y="5" width="1" height="7" fill="#000"/><rect x="2" y="5" width="4" height="1" fill="#000"/><rect x="2" y="8" width="4" height="1" fill="#000"/><rect x="3" y="6" width="3" height="1" fill="#ff8a10"/><rect x="3" y="9" width="3" height="1" fill="#ff8a10"/><rect x="8" y="5" width="2" height="1" fill="#000"/><rect x="11" y="5" width="3" height="1" fill="#000"/><rect x="8" y="7" width="1" height="1" fill="#000"/><rect x="10" y="7" width="4" height="1" fill="#000"/><rect x="9" y="9" width="4" height="1" fill="#000"/><rect x="14" y="9" width="1" height="1" fill="#000"/><rect x="8" y="11" width="4" height="1" fill="#000"/></svg>
<div class="t" style="left:113px;top:521.06px;font-size:10.5px;line-height:13px;">main</div>
<div class="t" style="left:325.5px;top:521.13px;font-size:10.3px;line-height:13px;">Main</div>
<div style="left:74.0px;top:535.0px;width:9px;height:9px;background:#fff;border:1px solid #a8876c"></div>
<div style="left:76.0px;top:539.0px;width:5px;height:1px;background:#000"></div>
<div style="left:78.0px;top:537.0px;width:1px;height:5px;background:#000"></div>
<div style="left:83px;top:539px;width:5px;height:1px;background-image:linear-gradient(90deg,#b09078 50%,transparent 50%);background-size:2px 1px"></div>
<svg style="left:91px;top:533px" width="16" height="13" viewBox="0 0 16 13"><rect x="0" y="0" width="16" height="13" fill="#b8b8b8"/><rect x="0" y="0" width="1" height="13" fill="#787878"/><rect x="15" y="0" width="1" height="13" fill="#787878"/><rect x="1" y="2" width="6" height="1" fill="#f8f8f8"/><rect x="8" y="2" width="7" height="1" fill="#f8f8f8"/><rect x="1" y="3" width="14" height="1" fill="#a4a4a4"/><rect x="1" y="4" width="14" height="9" fill="#eeeeee"/><rect x="2" y="5" width="1" height="7" fill="#000"/><rect x="2" y="5" width="4" height="1" fill="#000"/><rect x="2" y="8" width="4" height="1" fill="#000"/><rect x="3" y="6" width="3" height="1" fill="#ff8a10"/><rect x="3" y="9" width="3" height="1" fill="#ff8a10"/><rect x="8" y="5" width="2" height="1" fill="#000"/><rect x="11" y="5" width="3" height="1" fill="#000"/><rect x="8" y="7" width="1" height="1" fill="#000"/><rect x="10" y="7" width="4" height="1" fill="#000"/><rect x="9" y="9" width="4" height="1" fill="#000"/><rect x="14" y="9" width="1" height="1" fill="#000"/><rect x="8" y="11" width="4" height="1" fill="#000"/></svg>
<div class="t" style="left:113px;top:534.06px;font-size:10.5px;line-height:13px;letter-spacing:0.3px">project_tree</div>
<div class="t" style="left:246.5px;top:534.13px;font-size:10.3px;line-height:13px;">cStdProjectTr...</div>
<div class="t" style="left:325.5px;top:534.13px;font-size:10.3px;line-height:13px;">Main</div>
<div style="left:74.0px;top:548.0px;width:9px;height:9px;background:#fff;border:1px solid #a8876c"></div>
<div style="left:76.0px;top:552.0px;width:5px;height:1px;background:#000"></div>
<div style="left:78.0px;top:550.0px;width:1px;height:5px;background:#000"></div>
<div style="left:83px;top:552px;width:5px;height:1px;background-image:linear-gradient(90deg,#b09078 50%,transparent 50%);background-size:2px 1px"></div>
<svg style="left:91px;top:546px" width="16" height="13" viewBox="0 0 16 13"><rect x="0" y="0" width="16" height="13" fill="#b8b8b8"/><rect x="0" y="0" width="1" height="13" fill="#787878"/><rect x="15" y="0" width="1" height="13" fill="#787878"/><rect x="1" y="2" width="6" height="1" fill="#f8f8f8"/><rect x="8" y="2" width="7" height="1" fill="#f8f8f8"/><rect x="1" y="3" width="14" height="1" fill="#a4a4a4"/><rect x="1" y="4" width="14" height="9" fill="#eeeeee"/><rect x="2" y="5" width="1" height="7" fill="#000"/><rect x="2" y="5" width="4" height="1" fill="#000"/><rect x="2" y="8" width="4" height="1" fill="#000"/><rect x="3" y="6" width="3" height="1" fill="#ff8a10"/><rect x="3" y="9" width="3" height="1" fill="#ff8a10"/><rect x="8" y="5" width="2" height="1" fill="#000"/><rect x="11" y="5" width="3" height="1" fill="#000"/><rect x="8" y="7" width="1" height="1" fill="#000"/><rect x="10" y="7" width="4" height="1" fill="#000"/><rect x="9" y="9" width="4" height="1" fill="#000"/><rect x="14" y="9" width="1" height="1" fill="#000"/><rect x="8" y="11" width="4" height="1" fill="#000"/></svg>
<div class="t" style="left:113px;top:547.06px;font-size:10.5px;line-height:13px;">property_stack</div>
<div class="t" style="left:325.5px;top:547.13px;font-size:10.3px;line-height:13px;">Main</div>
<div style="left:406px;top:78px;width:1px;height:484px;background:#a8876c"></div>
<div style="left:407px;top:79px;width:1px;height:483px;background:#3a3432"></div>
<div style="left:407px;top:79px;width:143px;height:1px;background:#2a2624"></div>
<div style="left:555px;top:92px;width:427px;height:1px;background:#f4ede6"></div>
<svg style="left:412px;top:80px" width="142.5" height="14" viewBox="0 0 142.5 14"><path d="M0.5 14 L5.2 3 Q6.2 0.7 8.8 0.7 H133.7 Q136.3 0.7 137.3 3 L142.0 14" fill="#fff" stroke="#1a1614" stroke-width="1.1"/></svg>
<svg style="left:555px;top:80px" width="141.5" height="14" viewBox="0 0 141.5 14"><path d="M0.5 14 L5.2 3 Q6.2 0.7 8.8 0.7 H132.7 Q135.3 0.7 136.3 3 L141.0 14" fill="none" stroke="#1a1614" stroke-width="1.1"/></svg>
<svg style="left:697px;top:80px" width="142.5" height="14" viewBox="0 0 142.5 14"><path d="M0.5 14 L5.2 3 Q6.2 0.7 8.8 0.7 H133.7 Q136.3 0.7 137.3 3 L142.0 14" fill="none" stroke="#1a1614" stroke-width="1.1"/></svg>
<div class="t" style="left:460.5px;top:79.83px;font-size:10.6px;line-height:14px;">Definition</div>
<div class="t" style="left:588px;top:80.83px;font-size:10.6px;line-height:14px;letter-spacing:0.25px">Text definitions</div>
<div class="t" style="left:740px;top:80.83px;font-size:10.6px;line-height:14px;">Datasource</div>
<div class="t" style="left:416.7px;top:98.93px;font-size:10.6px;line-height:14px;">Name</div>
<div style="left:488px;top:98px;width:400px;height:17px;background:#fff;border-top:1px solid #957860;border-left:1px solid #957860;border-right:1px solid #f8f3ee;border-bottom:1px solid #f8f3ee"></div>
<div style="left:489px;top:99px;width:398px;height:1px;background:#4a403a"></div>
<div style="left:489px;top:99px;width:1px;height:15px;background:#4a403a"></div>
<div class="t" style="left:492.5px;top:100.83px;font-size:10.6px;line-height:14px;">tree_common</div>
<div style="left:893px;top:98px;width:59px;height:17px;background:#fff;border-top:1px solid #957860;border-left:1px solid #957860;border-right:1px solid #f8f3ee;border-bottom:1px solid #f8f3ee"></div>
<div style="left:894px;top:99px;width:57px;height:1px;background:#4a403a"></div>
<div style="left:894px;top:99px;width:1px;height:15px;background:#4a403a"></div>
<div class="t" style="left:897.5px;top:100.83px;font-size:10.6px;line-height:14px;">0</div>
<div style="left:957px;top:100px;width:12px;height:12px;background:#fff;border-top:1px solid #957860;border-left:1px solid #957860;border-right:1px solid #f8f3ee;border-bottom:1px solid #f8f3ee"></div>
<div style="left:958px;top:101px;width:10px;height:1px;background:#4a403a"></div>
<div style="left:958px;top:101px;width:1px;height:10px;background:#4a403a"></div>
<svg style="left:959px;top:102px" width="9" height="9" viewBox="0 0 8 8"><path d="M1 3.2L3.2 5.6L7 1.2" stroke="#000" stroke-width="1.8" fill="none"/></svg>
<div class="t" style="left:416.7px;top:125.33px;font-size:10.6px;line-height:14px;">Context class</div>
<div style="left:487px;top:122px;width:488px;height:25px;border:1px solid #a8876c"></div>
<div style="left:488px;top:123px;width:487px;height:24px;border-left:1px solid #f8f3ee;border-top:1px solid #f8f3ee"></div>
<div style="left:487px;top:147px;width:489px;height:1px;background:#f8f3ee"></div>
<div style="left:975px;top:122px;width:1px;height:26px;background:#f8f3ee"></div>
<div style="left:491px;top:125px;width:380px;height:17px;background:#fff;border-top:1px solid #957860;border-left:1px solid #957860;border-right:1px solid #f8f3ee;border-bottom:1px solid #f8f3ee"></div>
<div style="left:492px;top:126px;width:378px;height:1px;background:#4a403a"></div>
<div style="left:492px;top:126px;width:1px;height:15px;background:#4a403a"></div>
<div style="left:880px;top:125px;width:69px;height:17px;background:#fff;border-top:1px solid #957860;border-left:1px solid #957860;border-right:1px solid #f8f3ee;border-bottom:1px solid #f8f3ee"></div>
<div style="left:881px;top:126px;width:67px;height:1px;background:#4a403a"></div>
<div style="left:881px;top:126px;width:1px;height:15px;background:#4a403a"></div>
<div class="t" style="left:884.5px;top:127.83px;font-size:10.6px;line-height:14px;">0</div>
<div style="left:952px;top:124px;width:20px;height:19px;background:#e0d4c8;box-shadow:inset 1px 1px 0 #f8f3ee,inset -1px -1px 0 #4a403a,inset -2px -2px 0 #a8876c"></div>
<svg style="left:955px;top:127px" width="14" height="14" viewBox="0 0 14 14"><path d="M4.5 4.4L9.5 9.6" stroke="#302010" stroke-width="1.6"/><circle cx="4.5" cy="4.4" r="2.9" fill="#2038c0" stroke="#101040" stroke-width="0.6"/><circle cx="3.8" cy="3.6" r="1" fill="#7088e8"/><circle cx="9.5" cy="9.6" r="2.9" fill="#f0a018" stroke="#503008" stroke-width="0.6"/><circle cx="8.8" cy="8.8" r="1" fill="#ffd880"/></svg>
<div class="t" style="left:416.7px;top:148.93px;font-size:10.6px;line-height:14px;">Options</div>
<div style="left:417px;top:164px;width:88px;height:156px;border:1px solid #a8876c"></div>
<div style="left:418px;top:165px;width:87px;height:155px;border-left:1px solid #f8f3ee;border-top:1px solid #f8f3ee"></div>
<div style="left:417px;top:320px;width:89px;height:1px;background:#f8f3ee"></div>
<div style="left:505px;top:164px;width:1px;height:157px;background:#f8f3ee"></div>
<div style="left:424px;top:172px;width:11px;height:11px;background:#fff;border-top:1px solid #957860;border-left:1px solid #957860;border-right:1px solid #f8f3ee;border-bottom:1px solid #f8f3ee"></div>
<div style="left:425px;top:173px;width:9px;height:1px;background:#4a403a"></div>
<div style="left:425px;top:173px;width:1px;height:9px;background:#4a403a"></div>
<div class="t" style="left:439.3px;top:170.83px;font-size:10.6px;line-height:14px;">Auto open</div>
<div style="left:424px;top:191px;width:11px;height:11px;background:#fff;border-top:1px solid #957860;border-left:1px solid #957860;border-right:1px solid #f8f3ee;border-bottom:1px solid #f8f3ee"></div>
<div style="left:425px;top:192px;width:9px;height:1px;background:#4a403a"></div>
<div style="left:425px;top:192px;width:1px;height:9px;background:#4a403a"></div>
<svg style="left:426px;top:193px" width="8" height="8" viewBox="0 0 8 8"><path d="M1 3.2L3.2 5.6L7 1.2" stroke="#000" stroke-width="1.8" fill="none"/></svg>
<div class="t" style="left:439.3px;top:189.73px;font-size:10.6px;line-height:14px;">Drop</div>
<div style="left:424px;top:209px;width:11px;height:11px;background:#fff;border-top:1px solid #957860;border-left:1px solid #957860;border-right:1px solid #f8f3ee;border-bottom:1px solid #f8f3ee"></div>
<div style="left:425px;top:210px;width:9px;height:1px;background:#4a403a"></div>
<div style="left:425px;top:210px;width:1px;height:9px;background:#4a403a"></div>
<div class="t" style="left:439.3px;top:207.83px;font-size:10.6px;line-height:14px;">Checked</div>
<div style="left:424px;top:227px;width:11px;height:11px;background:#fff;border-top:1px solid #957860;border-left:1px solid #957860;border-right:1px solid #f8f3ee;border-bottom:1px solid #f8f3ee"></div>
<div style="left:425px;top:228px;width:9px;height:1px;background:#4a403a"></div>
<div style="left:425px;top:228px;width:1px;height:9px;background:#4a403a"></div>
<div class="t" style="left:439.3px;top:225.53px;font-size:10.6px;line-height:14px;">Hidden</div>
<div style="left:424px;top:243px;width:11px;height:11px;background:#fff;border-top:1px solid #957860;border-left:1px solid #957860;border-right:1px solid #f8f3ee;border-bottom:1px solid #f8f3ee"></div>
<div style="left:425px;top:244px;width:9px;height:1px;background:#4a403a"></div>
<div style="left:425px;top:244px;width:1px;height:9px;background:#4a403a"></div>
<div class="t" style="left:439.3px;top:242.03px;font-size:10.6px;line-height:14px;">Disabled</div>
<div style="left:424px;top:266px;width:11px;height:11px;background:#fff;border-top:1px solid #957860;border-left:1px solid #957860;border-right:1px solid #f8f3ee;border-bottom:1px solid #f8f3ee"></div>
<div style="left:425px;top:267px;width:9px;height:1px;background:#4a403a"></div>
<div style="left:425px;top:267px;width:1px;height:9px;background:#4a403a"></div>
<div class="t" style="left:439.3px;top:264.93px;font-size:10.6px;line-height:14px;">Separate</div>
<div style="left:424px;top:285px;width:11px;height:11px;background:#fff;border-top:1px solid #957860;border-left:1px solid #957860;border-right:1px solid #f8f3ee;border-bottom:1px solid #f8f3ee"></div>
<div style="left:425px;top:286px;width:9px;height:1px;background:#4a403a"></div>
<div style="left:425px;top:286px;width:1px;height:9px;background:#4a403a"></div>
<div class="t" style="left:439.3px;top:283.83px;font-size:10.6px;line-height:14px;">Docking</div>
<div style="left:424px;top:301px;width:11px;height:11px;background:#fff;border-top:1px solid #957860;border-left:1px solid #957860;border-right:1px solid #f8f3ee;border-bottom:1px solid #f8f3ee"></div>
<div style="left:425px;top:302px;width:9px;height:1px;background:#4a403a"></div>
<div style="left:425px;top:302px;width:1px;height:9px;background:#4a403a"></div>
<div class="t" style="left:439.3px;top:299.83px;font-size:10.6px;line-height:14px;">Mouse track.</div>
<div class="t" style="left:506.7px;top:148.93px;font-size:10.6px;line-height:14px;">Alignment</div>
<div style="left:507px;top:164px;width:378px;height:156px;border:1px solid #a8876c"></div>
<div style="left:508px;top:165px;width:377px;height:155px;border-left:1px solid #f8f3ee;border-top:1px solid #f8f3ee"></div>
<div style="left:507px;top:320px;width:379px;height:1px;background:#f8f3ee"></div>
<div style="left:885px;top:164px;width:1px;height:157px;background:#f8f3ee"></div>
<div class="t" style="left:512.6px;top:170.83px;font-size:10.6px;line-height:14px;">Rel. Position</div>
<div style="left:583px;top:171px;width:140px;height:18px;background:#fff;border-top:1px solid #957860;border-left:1px solid #957860;border-right:1px solid #f8f3ee;border-bottom:1px solid #f8f3ee"></div>
<div style="left:584px;top:172px;width:138px;height:1px;background:#4a403a"></div>
<div style="left:584px;top:172px;width:1px;height:16px;background:#4a403a"></div>
<div class="t" style="left:588px;top:174.33px;font-size:10.6px;line-height:14px;">POS_Parent</div>
<div style="left:706px;top:172px;width:16px;height:16px;background:#e0d4c8;box-shadow:inset 1px 1px 0 #f8f3ee,inset -1px -1px 0 #4a403a,inset -2px -2px 0 #a8876c"></div>
<svg style="left:710px;top:178px" width="7" height="4" viewBox="0 0 7 4"><path d="M0 0H7L3.5 4Z" fill="#000"/></svg>
<div class="t" style="left:512.6px;top:195.73px;font-size:10.6px;line-height:14px;">Horiz. position</div>
<div style="left:583px;top:196px;width:140px;height:18px;background:#fff;border-top:1px solid #957860;border-left:1px solid #957860;border-right:1px solid #f8f3ee;border-bottom:1px solid #f8f3ee"></div>
<div style="left:584px;top:197px;width:138px;height:1px;background:#4a403a"></div>
<div style="left:584px;top:197px;width:1px;height:16px;background:#4a403a"></div>
<div class="t" style="left:588px;top:199.33px;font-size:10.6px;line-height:14px;">HPS_InnerLeft</div>
<div style="left:706px;top:197px;width:16px;height:16px;background:#e0d4c8;box-shadow:inset 1px 1px 0 #f8f3ee,inset -1px -1px 0 #4a403a,inset -2px -2px 0 #a8876c"></div>
<svg style="left:710px;top:203px" width="7" height="4" viewBox="0 0 7 4"><path d="M0 0H7L3.5 4Z" fill="#000"/></svg>
<div class="t" style="left:512.6px;top:219.83px;font-size:10.6px;line-height:14px;">Vert. position</div>
<div style="left:583px;top:220px;width:140px;height:18px;background:#fff;border-top:1px solid #957860;border-left:1px solid #957860;border-right:1px solid #f8f3ee;border-bottom:1px solid #f8f3ee"></div>
<div style="left:584px;top:221px;width:138px;height:1px;background:#4a403a"></div>
<div style="left:584px;top:221px;width:1px;height:16px;background:#4a403a"></div>
<div class="t" style="left:588px;top:223.33px;font-size:10.6px;line-height:14px;">VPS_InnerTop</div>
<div style="left:706px;top:221px;width:16px;height:16px;background:#e0d4c8;box-shadow:inset 1px 1px 0 #f8f3ee,inset -1px -1px 0 #4a403a,inset -2px -2px 0 #a8876c"></div>
<svg style="left:710px;top:227px" width="7" height="4" viewBox="0 0 7 4"><path d="M0 0H7L3.5 4Z" fill="#000"/></svg>
<div class="t" style="left:512.6px;top:244.03px;font-size:10.6px;line-height:14px;">Arrangement</div>
<div style="left:583px;top:244px;width:140px;height:18px;background:#fff;border-top:1px solid #957860;border-left:1px solid #957860;border-right:1px solid #f8f3ee;border-bottom:1px solid #f8f3ee"></div>
<div style="left:584px;top:245px;width:138px;height:1px;background:#4a403a"></div>
<div style="left:584px;top:245px;width:1px;height:16px;background:#4a403a"></div>
<div class="t" style="left:588px;top:247.33px;font-size:10.6px;line-height:14px;">AT_Grid</div>
<div style="left:706px;top:245px;width:16px;height:16px;background:#e0d4c8;box-shadow:inset 1px 1px 0 #f8f3ee,inset -1px -1px 0 #4a403a,inset -2px -2px 0 #a8876c"></div>
<svg style="left:710px;top:251px" width="7" height="4" viewBox="0 0 7 4"><path d="M0 0H7L3.5 4Z" fill="#000"/></svg>
<div class="t" style="left:512.6px;top:268.93px;font-size:10.6px;line-height:14px;">Horiz. sizing</div>
<div style="left:583px;top:268px;width:140px;height:18px;background:#fff;border-top:1px solid #957860;border-left:1px solid #957860;border-right:1px solid #f8f3ee;border-bottom:1px solid #f8f3ee"></div>
<div style="left:584px;top:269px;width:138px;height:1px;background:#4a403a"></div>
<div style="left:584px;top:269px;width:1px;height:16px;background:#4a403a"></div>
<div class="t" style="left:588px;top:272.13px;font-size:10.6px;line-height:14px;">SIZE_Grow</div>
<div style="left:706px;top:269px;width:16px;height:16px;background:#e0d4c8;box-shadow:inset 1px 1px 0 #f8f3ee,inset -1px -1px 0 #4a403a,inset -2px -2px 0 #a8876c"></div>
<svg style="left:710px;top:275px" width="7" height="4" viewBox="0 0 7 4"><path d="M0 0H7L3.5 4Z" fill="#000"/></svg>
<div class="t" style="left:512.6px;top:292.93px;font-size:10.6px;line-height:14px;">Vert. sizing</div>
<div style="left:583px;top:292px;width:140px;height:18px;background:#fff;border-top:1px solid #957860;border-left:1px solid #957860;border-right:1px solid #f8f3ee;border-bottom:1px solid #f8f3ee"></div>
<div style="left:584px;top:293px;width:138px;height:1px;background:#4a403a"></div>
<div style="left:584px;top:293px;width:1px;height:16px;background:#4a403a"></div>
<div class="t" style="left:588px;top:296.13px;font-size:10.6px;line-height:14px;">SIZE_Grow</div>
<div style="left:706px;top:293px;width:16px;height:16px;background:#e0d4c8;box-shadow:inset 1px 1px 0 #f8f3ee,inset -1px -1px 0 #4a403a,inset -2px -2px 0 #a8876c"></div>
<svg style="left:710px;top:299px" width="7" height="4" viewBox="0 0 7 4"><path d="M0 0H7L3.5 4Z" fill="#000"/></svg>
<div class="t" style="left:729.5px;top:170.83px;font-size:10.6px;line-height:14px;">Margin</div>
<div style="left:730px;top:186px;width:149px;height:50px;border:1px solid #a8876c"></div>
<div style="left:731px;top:187px;width:148px;height:49px;border-left:1px solid #f8f3ee;border-top:1px solid #f8f3ee"></div>
<div style="left:730px;top:236px;width:150px;height:1px;background:#f8f3ee"></div>
<div style="left:879px;top:186px;width:1px;height:51px;background:#f8f3ee"></div>
<div class="t" style="left:736px;top:192.93px;font-size:10.6px;line-height:14px;">Top</div>
<div style="left:762px;top:192px;width:31px;height:17px;background:#fff;border-top:1px solid #957860;border-left:1px solid #957860;border-right:1px solid #f8f3ee;border-bottom:1px solid #f8f3ee"></div>
<div style="left:763px;top:193px;width:29px;height:1px;background:#4a403a"></div>
<div style="left:763px;top:193px;width:1px;height:15px;background:#4a403a"></div>
<div class="t" style="left:766.2px;top:194.93px;font-size:10.6px;line-height:14px;">0</div>
<div class="t" style="left:799.6px;top:192.93px;font-size:10.6px;line-height:14px;">Bottom</div>
<div style="left:840px;top:192px;width:33px;height:17px;background:#fff;border-top:1px solid #957860;border-left:1px solid #957860;border-right:1px solid #f8f3ee;border-bottom:1px solid #f8f3ee"></div>
<div style="left:841px;top:193px;width:31px;height:1px;background:#4a403a"></div>
<div style="left:841px;top:193px;width:1px;height:15px;background:#4a403a"></div>
<div class="t" style="left:844.2px;top:194.93px;font-size:10.6px;line-height:14px;">0</div>
<div class="t" style="left:736px;top:213.13px;font-size:10.6px;line-height:14px;">Left</div>
<div style="left:762px;top:212px;width:31px;height:17px;background:#fff;border-top:1px solid #957860;border-left:1px solid #957860;border-right:1px solid #f8f3ee;border-bottom:1px solid #f8f3ee"></div>
<div style="left:763px;top:213px;width:29px;height:1px;background:#4a403a"></div>
<div style="left:763px;top:213px;width:1px;height:15px;background:#4a403a"></div>
<div class="t" style="left:766.2px;top:214.93px;font-size:10.6px;line-height:14px;">0</div>
<div class="t" style="left:799.6px;top:213.13px;font-size:10.6px;line-height:14px;">Right</div>
<div style="left:840px;top:212px;width:33px;height:17px;background:#fff;border-top:1px solid #957860;border-left:1px solid #957860;border-right:1px solid #f8f3ee;border-bottom:1px solid #f8f3ee"></div>
<div style="left:841px;top:213px;width:31px;height:1px;background:#4a403a"></div>
<div style="left:841px;top:213px;width:1px;height:15px;background:#4a403a"></div>
<div class="t" style="left:844.2px;top:214.93px;font-size:10.6px;line-height:14px;">0</div>
<div class="t" style="left:729.5px;top:245.73px;font-size:10.6px;line-height:14px;">Cell span</div>
<div style="left:730px;top:261px;width:67px;height:50px;border:1px solid #a8876c"></div>
<div style="left:731px;top:262px;width:66px;height:49px;border-left:1px solid #f8f3ee;border-top:1px solid #f8f3ee"></div>
<div style="left:730px;top:311px;width:68px;height:1px;background:#f8f3ee"></div>
<div style="left:797px;top:261px;width:1px;height:51px;background:#f8f3ee"></div>
<div class="t" style="left:736px;top:267.73px;font-size:10.6px;line-height:14px;">X</div>
<div style="left:762px;top:268px;width:29px;height:16px;background:#fff;border-top:1px solid #957860;border-left:1px solid #957860;border-right:1px solid #f8f3ee;border-bottom:1px solid #f8f3ee"></div>
<div style="left:763px;top:269px;width:27px;height:1px;background:#4a403a"></div>
<div style="left:763px;top:269px;width:1px;height:14px;background:#4a403a"></div>
<div class="t" style="left:766.8px;top:269.93px;font-size:10.6px;line-height:14px;">1</div>
<div class="t" style="left:736px;top:287.33px;font-size:10.6px;line-height:14px;">Y</div>
<div style="left:762px;top:288px;width:29px;height:16px;background:#fff;border-top:1px solid #957860;border-left:1px solid #957860;border-right:1px solid #f8f3ee;border-bottom:1px solid #f8f3ee"></div>
<div style="left:763px;top:289px;width:27px;height:1px;background:#4a403a"></div>
<div style="left:763px;top:289px;width:1px;height:14px;background:#4a403a"></div>
<div class="t" style="left:766.8px;top:289.93px;font-size:10.6px;line-height:14px;">1</div>
<div class="t" style="left:809.5px;top:245.73px;font-size:10.6px;line-height:14px;">Grow rate</div>
<div style="left:810px;top:261px;width:69px;height:50px;border:1px solid #a8876c"></div>
<div style="left:811px;top:262px;width:68px;height:49px;border-left:1px solid #f8f3ee;border-top:1px solid #f8f3ee"></div>
<div style="left:810px;top:311px;width:70px;height:1px;background:#f8f3ee"></div>
<div style="left:879px;top:261px;width:1px;height:51px;background:#f8f3ee"></div>
<div class="t" style="left:815.5px;top:267.73px;font-size:10.6px;line-height:14px;">Hori.</div>
<div style="left:846px;top:268px;width:27px;height:16px;background:#fff;border-top:1px solid #957860;border-left:1px solid #957860;border-right:1px solid #f8f3ee;border-bottom:1px solid #f8f3ee"></div>
<div style="left:847px;top:269px;width:25px;height:1px;background:#4a403a"></div>
<div style="left:847px;top:269px;width:1px;height:14px;background:#4a403a"></div>
<div class="t" style="left:850.2px;top:269.93px;font-size:10.6px;line-height:14px;">0</div>
<div class="t" style="left:815.5px;top:287.33px;font-size:10.6px;line-height:14px;">Vert.</div>
<div style="left:846px;top:288px;width:27px;height:16px;background:#fff;border-top:1px solid #957860;border-left:1px solid #957860;border-right:1px solid #f8f3ee;border-bottom:1px solid #f8f3ee"></div>
<div style="left:847px;top:289px;width:25px;height:1px;background:#4a403a"></div>
<div style="left:847px;top:289px;width:1px;height:14px;background:#4a403a"></div>
<div class="t" style="left:850.2px;top:289.93px;font-size:10.6px;line-height:14px;">0</div>
<div style="left:890px;top:164px;width:87px;height:156px;border:1px solid #a8876c"></div>
<div style="left:891px;top:165px;width:86px;height:155px;border-left:1px solid #f8f3ee;border-top:1px solid #f8f3ee"></div>
<div style="left:890px;top:320px;width:88px;height:1px;background:#f8f3ee"></div>
<div style="left:977px;top:164px;width:1px;height:157px;background:#f8f3ee"></div>
<div class="t" style="left:893.8px;top:169.13px;font-size:10.6px;line-height:14px;">Size</div>
<div style="left:894px;top:184px;width:78px;height:50px;border:1px solid #a8876c"></div>
<div style="left:895px;top:185px;width:77px;height:49px;border-left:1px solid #f8f3ee;border-top:1px solid #f8f3ee"></div>
<div style="left:894px;top:234px;width:79px;height:1px;background:#f8f3ee"></div>
<div style="left:972px;top:184px;width:1px;height:51px;background:#f8f3ee"></div>
<div class="t" style="left:899.8px;top:193.03px;font-size:10.6px;line-height:14px;">Width</div>
<div style="left:935px;top:190px;width:32px;height:17px;background:#fff;border-top:1px solid #957860;border-left:1px solid #957860;border-right:1px solid #f8f3ee;border-bottom:1px solid #f8f3ee"></div>
<div style="left:936px;top:191px;width:30px;height:1px;background:#4a403a"></div>
<div style="left:936px;top:191px;width:1px;height:15px;background:#4a403a"></div>
<div class="t" style="left:939.5px;top:192.93px;font-size:10.6px;line-height:14px;">0</div>
<div class="t" style="left:899.8px;top:212.93px;font-size:10.6px;line-height:14px;">Height</div>
<div style="left:935px;top:210px;width:32px;height:17px;background:#fff;border-top:1px solid #957860;border-left:1px solid #957860;border-right:1px solid #f8f3ee;border-bottom:1px solid #f8f3ee"></div>
<div style="left:936px;top:211px;width:30px;height:1px;background:#4a403a"></div>
<div style="left:936px;top:211px;width:1px;height:15px;background:#4a403a"></div>
<div class="t" style="left:939.5px;top:212.93px;font-size:10.6px;line-height:14px;">0</div>
<div class="t" style="left:893.5px;top:249.03px;font-size:10.6px;line-height:14px;">Position</div>
<div style="left:894px;top:264px;width:78px;height:50px;border:1px solid #a8876c"></div>
<div style="left:895px;top:265px;width:77px;height:49px;border-left:1px solid #f8f3ee;border-top:1px solid #f8f3ee"></div>
<div style="left:894px;top:314px;width:79px;height:1px;background:#f8f3ee"></div>
<div style="left:972px;top:264px;width:1px;height:51px;background:#f8f3ee"></div>
<div class="t" style="left:900px;top:272.93px;font-size:10.6px;line-height:14px;">X</div>
<div style="left:935px;top:271px;width:32px;height:16px;background:#fff;border-top:1px solid #957860;border-left:1px solid #957860;border-right:1px solid #f8f3ee;border-bottom:1px solid #f8f3ee"></div>
<div style="left:936px;top:272px;width:30px;height:1px;background:#4a403a"></div>
<div style="left:936px;top:272px;width:1px;height:14px;background:#4a403a"></div>
<div class="t" style="left:939.5px;top:272.93px;font-size:10.6px;line-height:14px;">0</div>
<div class="t" style="left:900px;top:292.93px;font-size:10.6px;line-height:14px;">Y</div>
<div style="left:935px;top:291px;width:32px;height:16px;background:#fff;border-top:1px solid #957860;border-left:1px solid #957860;border-right:1px solid #f8f3ee;border-bottom:1px solid #f8f3ee"></div>
<div style="left:936px;top:292px;width:30px;height:1px;background:#4a403a"></div>
<div style="left:936px;top:292px;width:1px;height:14px;background:#4a403a"></div>
<div class="t" style="left:940px;top:292.93px;font-size:10.6px;line-height:14px;">1</div>
<div style="left:424px;top:328px;width:11px;height:11px;background:#fff;border-top:1px solid #957860;border-left:1px solid #957860;border-right:1px solid #f8f3ee;border-bottom:1px solid #f8f3ee"></div>
<div style="left:425px;top:329px;width:9px;height:1px;background:#4a403a"></div>
<div style="left:425px;top:329px;width:1px;height:9px;background:#4a403a"></div>
<div class="t" style="left:438.5px;top:327.33px;font-size:10.6px;line-height:14px;">Disable sorting</div>
<div class="t" style="left:817.3px;top:326.73px;font-size:10.6px;line-height:14px;">Level</div>
<div style="left:848px;top:326px;width:29px;height:17px;background:#fff;border-top:1px solid #957860;border-left:1px solid #957860;border-right:1px solid #f8f3ee;border-bottom:1px solid #f8f3ee"></div>
<div style="left:849px;top:327px;width:27px;height:1px;background:#4a403a"></div>
<div style="left:849px;top:327px;width:1px;height:15px;background:#4a403a"></div>
<div class="t" style="left:853px;top:328.83px;font-size:10.6px;line-height:14px;">-1</div>
<div style="left:889.5px;top:326px;width:38.5px;height:16px;overflow:hidden"><div class="t" style="left:0;top:0.73px;font-size:10.6px;line-height:14px">Distance</div></div>
<div style="left:934px;top:326px;width:29px;height:17px;background:#fff;border-top:1px solid #957860;border-left:1px solid #957860;border-right:1px solid #f8f3ee;border-bottom:1px solid #f8f3ee"></div>
<div style="left:935px;top:327px;width:27px;height:1px;background:#4a403a"></div>
<div style="left:935px;top:327px;width:1px;height:15px;background:#4a403a"></div>
<div class="t" style="left:938.5px;top:328.83px;font-size:10.6px;line-height:14px;">0</div>
<div style="left:416px;top:358px;width:565px;height:30px;border:1px solid #a8876c"></div>
<div style="left:417px;top:359px;width:564px;height:29px;border-left:1px solid #f8f3ee;border-top:1px solid #f8f3ee"></div>
<div style="left:416px;top:388px;width:566px;height:1px;background:#f8f3ee"></div>
<div style="left:981px;top:358px;width:1px;height:31px;background:#f8f3ee"></div>
<div class="t" style="left:421.5px;top:364.93px;font-size:10.6px;line-height:14px;">Class</div>
<div style="left:492px;top:364px;width:194px;height:19px;background:#fff;border-top:1px solid #957860;border-left:1px solid #957860;border-right:1px solid #f8f3ee;border-bottom:1px solid #f8f3ee"></div>
<div style="left:493px;top:365px;width:192px;height:1px;background:#4a403a"></div>
<div style="left:493px;top:365px;width:1px;height:17px;background:#4a403a"></div>
<div class="t" style="left:497px;top:367.53px;font-size:10.6px;line-height:14px;">Main</div>
<div style="left:669px;top:365px;width:16px;height:17px;background:#e0d4c8;box-shadow:inset 1px 1px 0 #f8f3ee,inset -1px -1px 0 #4a403a,inset -2px -2px 0 #a8876c"></div>
<svg style="left:673px;top:371px" width="7" height="4" viewBox="0 0 7 4"><path d="M0 0H7L3.5 4Z" fill="#000"/></svg>
<div class="t" style="left:698.3px;top:364.63px;font-size:10.6px;line-height:14px;">Field control</div>
<div style="left:764px;top:364px;width:207px;height:19px;background:#fff;border-top:1px solid #957860;border-left:1px solid #957860;border-right:1px solid #f8f3ee;border-bottom:1px solid #f8f3ee"></div>
<div style="left:765px;top:365px;width:205px;height:1px;background:#4a403a"></div>
<div style="left:765px;top:365px;width:1px;height:17px;background:#4a403a"></div>
<div class="t" style="left:769px;top:367.53px;font-size:10.6px;line-height:14px;">tree_common</div>
<div style="left:954px;top:365px;width:16px;height:17px;background:#e0d4c8;box-shadow:inset 1px 1px 0 #f8f3ee,inset -1px -1px 0 #4a403a,inset -2px -2px 0 #a8876c"></div>
<svg style="left:958px;top:371px" width="7" height="4" viewBox="0 0 7 4"><path d="M0 0H7L3.5 4Z" fill="#000"/></svg>
<div style="left:412px;top:544px;width:570px;height:1px;background:#a8876c"></div>
<div style="left:412px;top:545px;width:570px;height:1px;background:#3a3432"></div>
<svg style="left:412px;top:546px" width="139.5" height="12" viewBox="0 0 139.5 12"><path d="M0.5 0 L5 9 Q5.8 11.3 8.5 11.3 H131.0 Q133.7 11.3 134.5 9 L139.0 0" fill="none" stroke="#1a1614" stroke-width="1.1"/></svg>
<svg style="left:696px;top:546px" width="143.5" height="12" viewBox="0 0 143.5 12"><path d="M0.5 0 L5 9 Q5.8 11.3 8.5 11.3 H135.0 Q137.7 11.3 138.5 9 L143.0 0" fill="none" stroke="#1a1614" stroke-width="1.1"/></svg>
<svg style="left:554px;top:544px" width="142" height="14" viewBox="0 0 142 14"><path d="M0.5 0 L5 11 Q5.8 13.3 8.5 13.3 H133.5 Q136.2 13.3 137 11 L141.5 0" fill="#fff" stroke="#1a1614" stroke-width="1.1"/><rect x="1.2" y="0" width="139.6" height="2" fill="#fff"/></svg>
<div class="t" style="left:466.7px;top:544.13px;font-size:10.6px;line-height:14px;">Design</div>
<div class="t" style="left:600.4px;top:544.73px;font-size:10.6px;line-height:14px;">Properties</div>
<div class="t" style="left:729.4px;top:543.73px;font-size:10.6px;line-height:14px;">Context classes</div>
<svg style="left:400px;top:158px" width="120" height="40" viewBox="0 0 120 40"><ellipse cx="58.5" cy="18.7" rx="49.8" ry="12.5" fill="none" stroke="#8a1226" stroke-width="2.9"/></svg>
<svg style="left:540px;top:530px" width="180" height="44" viewBox="0 0 180 44"><ellipse cx="89" cy="21.4" rx="80" ry="13.3" fill="none" stroke="#8a1226" stroke-width="3"/></svg>
<svg style="left:975px;top:571px" width="12" height="12" viewBox="0 0 12 12"><path d="M0 12L12 0M4 12L12 4M8 12L12 8" stroke="#a8876c" stroke-width="1.3"/><path d="M1 12L12 1M5 12L12 5M9 12L12 9" stroke="#f8f3ee" stroke-width="0.7"/></svg>
</body></html>
